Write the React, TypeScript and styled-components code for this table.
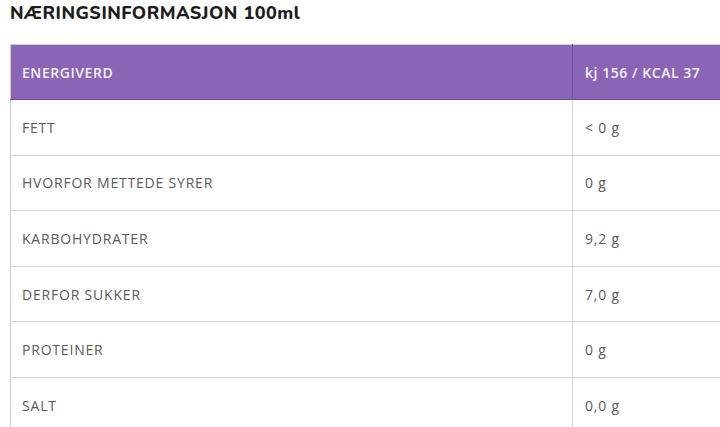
import React from "react";
import styled, { createGlobalStyle } from "styled-components";

const Global = createGlobalStyle`
  html, body { margin: 0; padding: 0; background: #fff; overflow: hidden; }
  body { font-family: "Open Sans", "Liberation Sans", sans-serif; }
`;

const Page = styled.div`
  padding: 3px 0 0 10px;
  width: 760px;
`;

const Title = styled.h2`
  margin: 0 0 20px 0;
  font-family: "Nunito", "Lato", "Open Sans", sans-serif;
  font-weight: 800;
  font-size: 18px;
  line-height: 21px;
  color: #1d1d1d;
  letter-spacing: 0.5px;
`;

const Table = styled.table`
  border-collapse: collapse;
  width: 760px;
  table-layout: fixed;
  border: 1px solid #cfcfcf;
`;

const Row = styled.tr<{ $head?: boolean }>`
  height: ${(p) => (p.$head ? "55px" : "55.6px")};
  background: ${(p) => (p.$head ? "#8a65b5" : "#fff")};
  border-bottom: 1px solid ${(p) => (p.$head ? "#6f4f96" : "#d4d4d4")};
`;

const Cell = styled.td<{ $head?: boolean; $value?: boolean }>`
  padding: 0 0 0 ${(p) => (p.$value ? "12px" : "11px")};
  border-left: ${(p) => (p.$value ? `1px solid ${p.$head ? "#6f4f96" : "#d4d4d4"}` : "none")};
  font-family: "Open Sans", "Liberation Sans", sans-serif;
  font-size: 14px;
  font-weight: ${(p) => (p.$head ? 600 : 400)};
  color: ${(p) => (p.$head ? "#f4f0f8" : "#5a5a5a")};
  vertical-align: middle;
  letter-spacing: ${(p) => (p.$head ? "0.55px" : "0.8px")};
`;

const rows: [string, string][] = [
  ["FETT", "< 0 g"],
  ["HVORFOR METTEDE SYRER", "0 g"],
  ["KARBOHYDRATER", "9,2 g"],
  ["DERFOR SUKKER", "7,0 g"],
  ["PROTEINER", "0 g"],
  ["SALT", "0,0 g"],
];

export default function App() {
  return (
    <Page>
      <Global />
      <Title>NÆRINGSINFORMASJON 100ml</Title>
      <Table>
        <colgroup>
          <col style={{ width: 562 }} />
          <col />
        </colgroup>
        <tbody>
          <Row $head>
            <Cell $head>ENERGIVERD</Cell>
            <Cell $head $value>kj 156 / KCAL 37</Cell>
          </Row>
          {rows.map(([k, v]) => (
            <Row key={k}>
              <Cell>{k}</Cell>
              <Cell $value>{v}</Cell>
            </Row>
          ))}
        </tbody>
      </Table>
    </Page>
  );
}
